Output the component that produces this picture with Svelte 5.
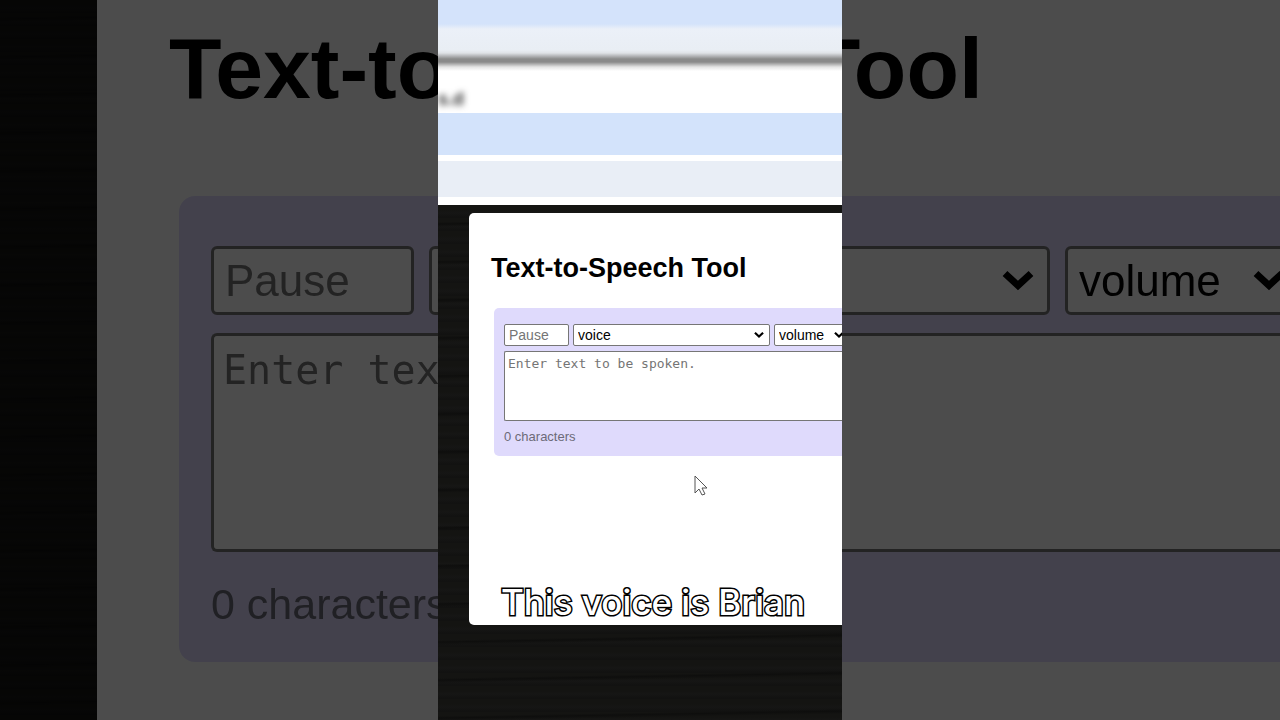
<script>
  const voices = ['voice', 'Brian', 'Amy', 'Emma', 'Joey']
  const volumes = ['volume', 'soft', 'medium', 'loud']

  let text = $state('')
</script>

<style>
  :global(body) {
    margin: 0;
    background: #050505;
  }
  * {
    box-sizing: border-box;
  }
  .stage {
    display: grid;
    grid-template-columns: 1fr 404px 1fr;
    grid-template-rows: 100vh;
    font-family: 'Liberation Sans', Arial, sans-serif;
  }
  .wood {
    background-color: #141414;
    background-image: repeating-linear-gradient(
        179deg,
        transparent 0 17px,
        #0e0e0d 19px,
        transparent 22px 38px
      ),
      repeating-linear-gradient(
        #141412 0 5px,
        #161615 8px,
        #121211 12px 13px
      );
  }
  .backdrop {
    grid-area: 1 / 1 / 2 / 4;
    display: flex;
    overflow: hidden;
    padding-left: 97px;
    filter: brightness(0.3);
    --line: 3px;
    --corner: 6px;
    --title: 86px;
    --title-line: 96px;
    --title-gap: 80px;
    --text: 44px;
    --count: 43px;
    --count-line: 50px;
    --mono: 40px;
    --mono-line: 50px;
    --pad-top: 20px;
    --pad-left: 72px;
    --indent: 10px;
    --box-pad: 50px 0 33px 32px;
    --box-corner: 16px;
    --row: 69px;
    --gap: 15px;
    --area-gap: 18px;
    --area: 219px;
    --count-gap: 27px;
    --pause: 203px;
    --voice: 621px;
    --volume: 236px;
    --inset: 11px;
    --area-inset: 9px;
    --arrow: 32px;
    --arrow-right: 16px;
  }
  .clip {
    grid-area: 1 / 2 / 2 / 3;
    position: relative;
    display: flex;
    flex-direction: column;
    overflow: hidden;
    --line: 1px;
    --corner: 2px;
    --title: 27px;
    --title-line: 31px;
    --title-gap: 24px;
    --text: 14px;
    --count: 13px;
    --count-line: 16px;
    --mono: 13px;
    --mono-line: 17px;
    --pad-top: 40px;
    --pad-left: 22px;
    --indent: 3px;
    --box-pad: 16px 0 11px 10px;
    --box-corner: 5px;
    --row: 22px;
    --gap: 4px;
    --area-gap: 5px;
    --area: 70px;
    --count-gap: 8px;
    --pause: 65px;
    --voice: 197px;
    --volume: 76px;
    --inset: 4px;
    --area-inset: 3px;
    --arrow: 10px;
    --arrow-right: 6px;
  }
  .browser {
    flex: none;
    background: #fff;
    padding-bottom: 8px;
  }
  .zoomed {
    height: 113px;
    padding-top: 88px;
    background: linear-gradient(
      #d4e3fb 0 24px,
      #ebf0f8 29px,
      #e9eef4 50px,
      #dfe2e6 53px,
      #8a8a8a 59px 62px,
      #e4e4e4 67px,
      #fff 71px
    );
  }
  .address {
    display: block;
    font-size: 18px;
    font-weight: bold;
    line-height: 22px;
    color: #333;
    filter: blur(3px);
  }
  .tabs {
    height: 42px;
    margin-bottom: 6px;
    background: #d3e3fb;
  }
  .toolbar {
    height: 36px;
    background: #e9eef6;
  }
  .page {
    flex: 1;
    display: flex;
    padding: 8px 0 95px 31px;
  }
  .panel {
    flex: 1;
    min-width: 0;
    padding: var(--pad-top) 0 0 var(--pad-left);
    background: #fff;
  }
  .clip .panel {
    border-radius: 5px 0 0 5px;
  }
  h1 {
    margin: 0 0 var(--title-gap);
    font-size: var(--title);
    line-height: var(--title-line);
    color: #000;
    white-space: nowrap;
  }
  .tool {
    margin-left: var(--indent);
    padding: var(--box-pad);
    border-radius: var(--box-corner) 0 0 var(--box-corner);
    background: #dfdafc;
    overflow: hidden;
  }
  .row {
    display: flex;
    gap: var(--gap);
    margin-bottom: var(--area-gap);
  }
  input,
  select,
  textarea {
    display: block;
    margin: 0;
    border: var(--line) solid #767676;
    border-radius: var(--corner);
    background: #fff;
    color: #000;
    font-family: inherit;
    font-size: var(--text);
    outline: 0;
  }
  input {
    flex: none;
    width: var(--pause);
    height: var(--row);
    padding: 0 var(--inset);
  }
  .pick {
    position: relative;
    flex: none;
    width: var(--voice);
  }
  .pick.volume {
    width: var(--volume);
  }
  select {
    appearance: none;
    width: 100%;
    height: var(--row);
    padding: 0 var(--inset);
  }
  .pick svg {
    position: absolute;
    top: 0;
    right: var(--arrow-right);
    width: var(--arrow);
    height: 100%;
    pointer-events: none;
  }
  textarea {
    width: 100%;
    height: var(--area);
    padding: var(--area-inset);
    border-right: 0;
    border-radius: var(--corner) 0 0 var(--corner);
    font-family: 'DejaVu Sans Mono', monospace;
    font-size: var(--mono);
    line-height: var(--mono-line);
    white-space: pre;
    overflow: hidden;
    resize: none;
  }
  ::placeholder {
    color: #757575;
    opacity: 1;
  }
  .count {
    margin: var(--count-gap) 0 0;
    font-size: var(--count);
    line-height: var(--count-line);
    color: #6c6a78;
  }
  .cursor {
    position: absolute;
    left: 256px;
    top: 475px;
    width: 14px;
    height: 22px;
  }
  .caption {
    position: absolute;
    left: 0;
    right: 0;
    bottom: 98px;
    margin: 0;
    padding-left: 26px;
    text-align: center;
    font-family: Inter, sans-serif;
    font-size: 35px;
    font-weight: 500;
    line-height: 40px;
    white-space: nowrap;
    color: #fff;
    -webkit-text-stroke: 3px #000;
    paint-order: stroke fill;
  }
</style>

{#snippet arrow()}
  <svg viewBox="0 0 32 32" aria-hidden="true">
    <path d="M3 9l13 12L29 9" fill="none" stroke="#000" stroke-width="7" />
  </svg>
{/snippet}

{#snippet panel()}
  <section class="panel">
    <h1>Text-to-Speech Tool</h1>
    <div class="tool">
      <div class="row">
        <input type="text" placeholder="Pause" aria-label="Pause" />
        <div class="pick">
          <select aria-label="voice">
            {#each voices as voice}
              <option>{voice}</option>
            {/each}
          </select>
          {@render arrow()}
        </div>
        <div class="pick volume">
          <select aria-label="volume">
            {#each volumes as volume}
              <option>{volume}</option>
            {/each}
          </select>
          {@render arrow()}
        </div>
      </div>
      <textarea
        bind:value={text}
        placeholder="Enter text to be spoken."
        aria-label="Text to be spoken"></textarea>
      <p class="count">{text.length} characters</p>
    </div>
  </section>
{/snippet}

<div class="stage">
  <div class="backdrop wood" aria-hidden="true" inert>
    {@render panel()}
  </div>

  <main class="clip">
    <div class="browser">
      <div class="zoomed">
        <span class="address">s.d</span>
      </div>
      <div class="tabs"></div>
      <div class="toolbar"></div>
    </div>
    <div class="page wood">
      {@render panel()}
    </div>
    <svg class="cursor" viewBox="0 0 14 22" aria-hidden="true">
      <path
        d="M1 1v17l4-4 3 6 3-1-3-6h5z"
        fill="#fff"
        stroke="#555"
        stroke-width="1" />
    </svg>
    <p class="caption">This voice is Brian</p>
  </main>
</div>
